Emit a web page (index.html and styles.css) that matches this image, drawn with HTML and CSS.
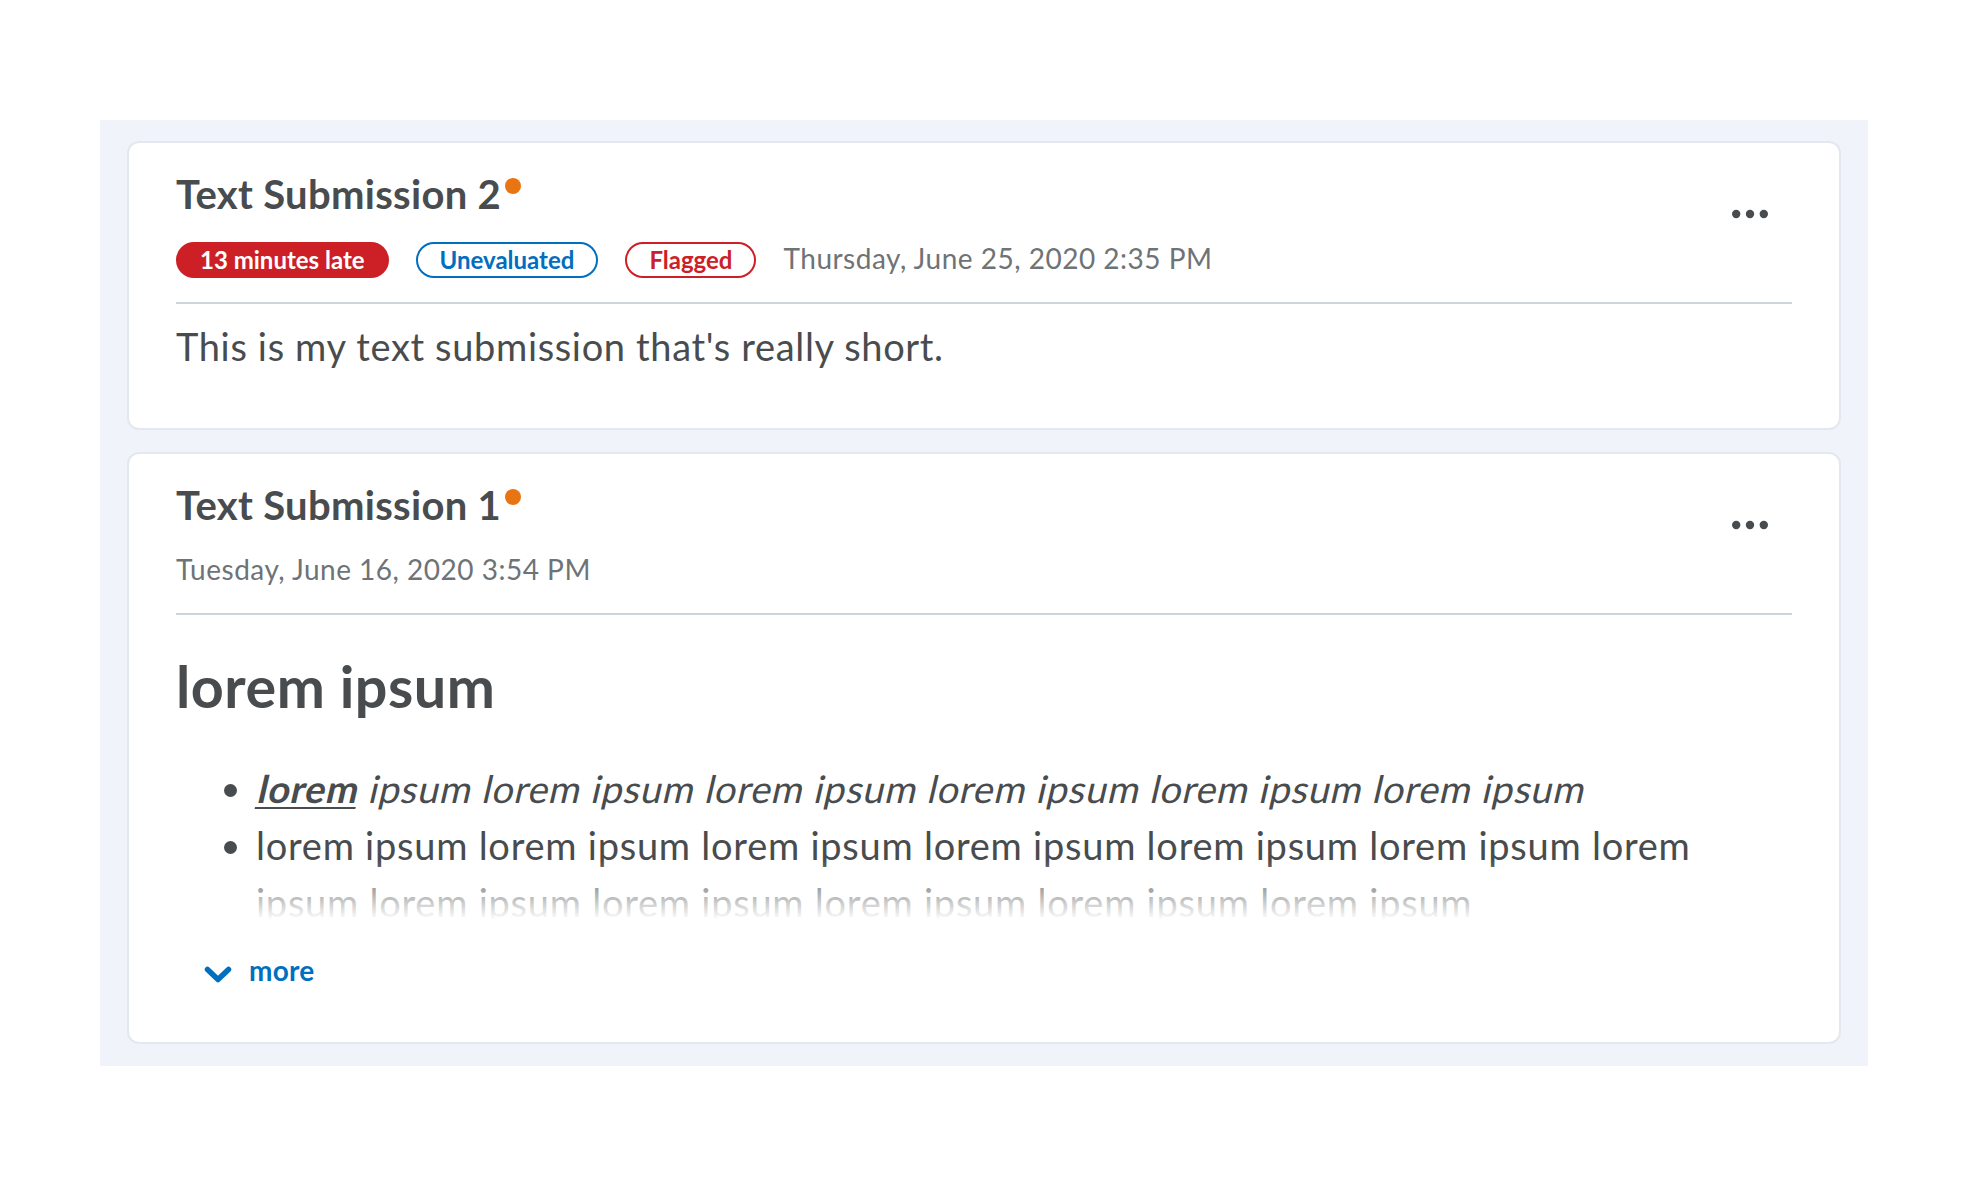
FILE: index.html
```html
<!DOCTYPE html>
<html lang="en">
<head>
<meta charset="utf-8">
<title>Submissions</title>
<link rel="stylesheet" href="styles.css">
</head>
<body>
<div class="page">
  <div class="list">
    <div class="card card-short">
      <div class="header">
        <div class="header-main">
          <h3 class="title">Text Submission 2<span class="new-dot"></span></h3>
          <div class="meta">
            <span class="badge badge-solid">13 minutes late</span>
            <span class="badge badge-blue">Unevaluated</span>
            <span class="badge badge-red">Flagged</span>
            <span class="date">Thursday, June 25, 2020 2:35 PM</span>
          </div>
        </div>
        <button class="menu-btn" aria-label="Actions">
          <svg width="36" height="10" viewBox="0 0 36 10"><circle cx="4.2" cy="5" r="4.2"/><circle cx="18" cy="5" r="4.2"/><circle cx="31.8" cy="5" r="4.2"/></svg>
        </button>
      </div>
      <div class="divider"></div>
      <p class="body-text">This is my text submission that's really short.</p>
    </div>

    <div class="card card-long">
      <div class="header">
        <div class="header-main">
          <h3 class="title">Text Submission 1<span class="new-dot"></span></h3>
          <div class="meta">
            <span class="date">Tuesday, June 16, 2020 3:54 PM</span>
          </div>
        </div>
        <button class="menu-btn" aria-label="Actions">
          <svg width="36" height="10" viewBox="0 0 36 10"><circle cx="4.2" cy="5" r="4.2"/><circle cx="18" cy="5" r="4.2"/><circle cx="31.8" cy="5" r="4.2"/></svg>
        </button>
      </div>
      <div class="divider"></div>
      <div class="more-less">
        <h2 class="content-heading">lorem ipsum</h2>
        <ul class="content-list">
          <li><span class="oblique"><strong><u>lorem</u></strong> ipsum lorem ipsum lorem ipsum lorem ipsum lorem ipsum lorem ipsum</span></li>
          <li>lorem ipsum lorem ipsum lorem ipsum lorem ipsum lorem ipsum lorem ipsum lorem ipsum lorem ipsum lorem ipsum lorem ipsum lorem ipsum lorem ipsum</li>
        </ul>
        <div class="blur"></div>
      </div>
      <button class="more-btn">
        <svg width="28" height="17" viewBox="0 0 28 17"><path d="M3.5 3.5 L14 13.5 L24.5 3.5" fill="none" stroke="#006fbf" stroke-width="5.5" stroke-linecap="round" stroke-linejoin="round"/></svg>
        <span class="more-label">more</span>
      </button>
    </div>
  </div>
</div>
</body>
</html>
```

FILE: styles.css
```css
* { box-sizing: border-box; }

html, body {
  margin: 0;
  padding: 0;
  background: #ffffff;
  font-family: Lato, "Open Sans", "Liberation Sans", sans-serif;
  color: #494c4e;
}

.page {
  padding: 120px 100px 0 100px;
}

.list {
  background: #f0f3fa;
  padding: 21px 27px 22px;
  display: flex;
  flex-direction: column;
  gap: 22px;
}

.card {
  background: #ffffff;
  border: 2px solid #e3e8f0;
  border-radius: 12px;
  padding: 27px 47px 0;
}

.card-short { padding-bottom: 53px; }
.card-long { padding-bottom: 44px; }

.header {
  display: flex;
  justify-content: space-between;
  align-items: flex-start;
}

.title {
  margin: 0;
  font-size: 40px;
  line-height: 48px;
  font-weight: 700;
  letter-spacing: 0.3px;
  color: #494c4e;
}

.new-dot {
  display: inline-block;
  width: 16px;
  height: 16px;
  border-radius: 50%;
  background: #e87511;
  vertical-align: top;
  margin-top: 8px;
  margin-left: 4px;
}

.meta {
  display: flex;
  align-items: center;
  gap: 27px;
  margin-top: 16px;
  height: 48px;
}

.badge {
  display: inline-flex;
  align-items: center;
  height: 36px;
  margin-top: 4px;
  padding: 0 22px;
  border: 2px solid;
  border-radius: 18px;
  font-size: 24px;
  font-weight: 700;
  line-height: 1;
}

.badge-solid {
  background: #cd2026;
  border-color: #cd2026;
  color: #ffffff;
}

.badge-blue {
  border-color: #006fbf;
  color: #006fbf;
}

.badge-red {
  border-color: #cd2026;
  color: #cd2026;
}

.date {
  font-size: 28px;
  line-height: 48px;
  letter-spacing: 0.5px;
  color: #6e7376;
}

.menu-btn {
  width: 84px;
  height: 84px;
  margin-top: 2px;
  border: none;
  background: transparent;
  padding: 0;
  display: flex;
  align-items: center;
  justify-content: center;
  fill: #494c4e;
}

.divider {
  border-top: 2px solid #cdd5dc;
  margin-top: 20px;
}

.body-text {
  margin: 14px 0 0;
  font-size: 38px;
  line-height: 57px;
  letter-spacing: 0.65px;
}

.more-less {
  position: relative;
  max-height: 305px;
  overflow: hidden;
}

.content-heading {
  margin: 35px 0 38px;
  font-size: 57.5px;
  line-height: 72px;
  font-weight: 700;
  letter-spacing: 0.5px;
}

.content-list {
  margin: 0;
  padding-left: 80px;
  font-size: 38px;
  line-height: 57px;
  letter-spacing: 0.75px;
}

.oblique {
  display: inline-block;
  transform: skewX(-13deg);
  transform-origin: 0 75%;
}

.content-list u {
  text-decoration-thickness: 2px;
  text-underline-offset: 4px;
}

.blur {
  position: absolute;
  left: 0;
  right: 0;
  bottom: 0;
  height: 60px;
  background: linear-gradient(rgba(255, 255, 255, 0), #ffffff);
}

.more-btn {
  margin-top: 30px;
  margin-left: 28px;
  height: 48px;
  padding: 0;
  border: none;
  background: transparent;
  display: flex;
  align-items: center;
  gap: 17px;
  font-family: Lato, "Open Sans", "Liberation Sans", sans-serif;
  font-size: 28px;
  font-weight: 700;
  letter-spacing: 0.2px;
  color: #006fbf;
}

.more-label {
  margin-bottom: 9px;
}
```
